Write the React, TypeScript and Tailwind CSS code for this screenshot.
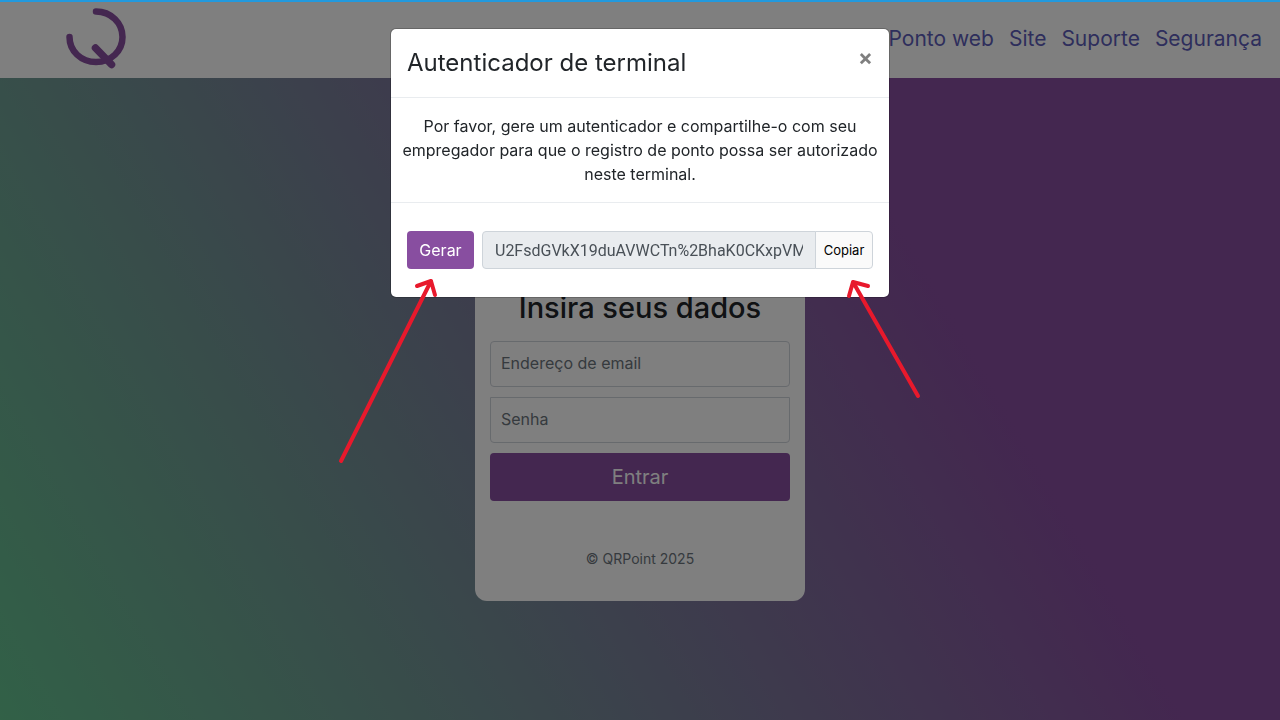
import { useState } from "react";
import type { FormEvent } from "react";

const navLinks = [
  { label: "Ponto web", href: "#ponto" },
  { label: "Site", href: "#site" },
  { label: "Suporte", href: "#suporte" },
  { label: "Segurança", href: "#seguranca" },
];

const TOKEN = "U2FsdGVkX19duAVWCTn%2BhaK0CKxpVMb7sQwT1n%2FzR4";

function Logo() {
  return (
    <svg
      viewBox="0 0 60 60"
      className="size-15 overflow-visible"
      fill="none"
      stroke="#884ea0"
      strokeWidth="6.5"
      strokeLinecap="round"
      role="img"
      aria-label="QRPoint"
    >
      <path d="M30 2.500C45 2.500 56.500 14 56.500 28C56.500 42 45 53 30 53C15 53 3.500 42 3.500 28" />
      <path d="M29.500 39L45.500 55.500" strokeWidth="7.5" />
    </svg>
  );
}

function Header() {
  return (
    <header className="flex h-[78px] items-center justify-between bg-white pr-[18px] pl-[66px]">
      <a href="#inicio">
        <Logo />
      </a>
      <nav className="flex gap-[15px] text-[21px] text-[#5c5cb8]">
        {navLinks.map((l) => (
          <a key={l.href} href={l.href}>
            {l.label}
          </a>
        ))}
      </nav>
    </header>
  );
}

function LoginCard() {
  const [email, setEmail] = useState("");
  const [password, setPassword] = useState("");

  function onSubmit(e: FormEvent) {
    e.preventDefault();
  }

  return (
    <form
      onSubmit={onSubmit}
      className="mx-auto mt-[122px] w-[330px] rounded-xl bg-white px-[15px] pt-[85px] pb-[31px] text-center"
    >
      <h1 className="mb-[11px] text-[29px] leading-[45px] font-medium text-[#212529]">
        Insira seus dados
      </h1>
      <input
        type="email"
        aria-label="Endereço de email"
        placeholder="Endereço de email"
        value={email}
        onChange={(e) => setEmail(e.target.value)}
        className="mb-[10px] block h-[46px] w-full rounded border border-[#ced4da] px-[10px] pb-[2px] text-base placeholder:text-[#6c757d]"
      />
      <input
        type="password"
        aria-label="Senha"
        placeholder="Senha"
        value={password}
        onChange={(e) => setPassword(e.target.value)}
        className="mb-[10px] block h-[46px] w-full rounded-b border border-[#ced4da] px-[10px] pb-[2px] text-base placeholder:text-[#6c757d]"
      />
      <button
        type="submit"
        className="block h-12 w-full rounded bg-[#884ea0] text-xl text-white"
      >
        Entrar
      </button>
      <p className="mt-[47px] text-sm leading-[22px] text-[#6c757d]">© QRPoint 2025</p>
    </form>
  );
}

function TerminalModal({ onClose }: { onClose: () => void }) {
  const [token, setToken] = useState(TOKEN);

  return (
    <div className="fixed inset-0 bg-black/50 pt-7">
      <div
        role="dialog"
        aria-modal="true"
        aria-labelledby="modal-title"
        className="mx-auto w-[500px] max-w-full rounded-md border border-black/20 bg-white bg-clip-padding text-[#212529]"
      >
        <div className="flex items-start justify-between border-b border-[#e9ecef] p-4">
          <h2 id="modal-title" className="text-2xl leading-9">
            Autenticador de terminal
          </h2>
          <button
            type="button"
            aria-label="Fechar"
            onClick={onClose}
            className="text-[22px] leading-6 font-bold text-black/50"
          >
            ×
          </button>
        </div>
        <p className="px-2 py-4 text-center text-base leading-6">
          Por favor, gere um autenticador e compartilhe-o com seu empregador para
          que o registro de ponto possa ser autorizado neste terminal.
        </p>
        <div className="flex gap-2 border-t border-[#e9ecef] px-4 py-7">
          <button
            type="button"
            onClick={() => setToken(TOKEN)}
            className="h-[38px] w-[67px] rounded bg-[#884ea0] text-white"
          >
            Gerar
          </button>
          <div className="flex min-w-0 flex-1">
            <input
              readOnly
              aria-label="Autenticador"
              value={token}
              className="h-[38px] min-w-0 flex-1 rounded-l border border-[#ced4da] bg-[#e9ecef] px-3 font-[Roboto,sans-serif] text-[#495057]"
            />
            <button
              type="button"
              onClick={() => navigator.clipboard?.writeText(token)}
              className="-ml-px h-[38px] w-[58px] rounded-r border border-[#ced4da] bg-[#fafafa] pt-[2px] text-[13px] text-black"
            >
              Copiar
            </button>
          </div>
        </div>
      </div>
    </div>
  );
}

// Hand-drawn style pointers over the "Gerar" and "Copiar" buttons.
function Pointers() {
  return (
    <svg
      className="pointer-events-none fixed top-[270px] left-1/2 h-[200px] w-[620px] -translate-x-1/2"
      viewBox="330 270 620 200"
      fill="none"
      stroke="#e8192c"
      strokeWidth="4"
      strokeLinecap="round"
      strokeLinejoin="round"
      aria-hidden="true"
    >
      <path d="M341 461L431 281M417 286L431 281L435 295" />
      <path d="M918 396L853 282M868 286L853 282L849 296" />
    </svg>
  );
}

export default function App() {
  const [open, setOpen] = useState(true);

  return (
    <div className="min-h-screen bg-[linear-gradient(60deg,#64c28f,#884ea0_70%)] font-[Inter,sans-serif]">
      <Header />
      <LoginCard />
      {open && <TerminalModal onClose={() => setOpen(false)} />}
      {open && <Pointers />}
      <div className="fixed inset-x-0 top-0 h-[2px] bg-[#2299dd]" />
    </div>
  );
}
